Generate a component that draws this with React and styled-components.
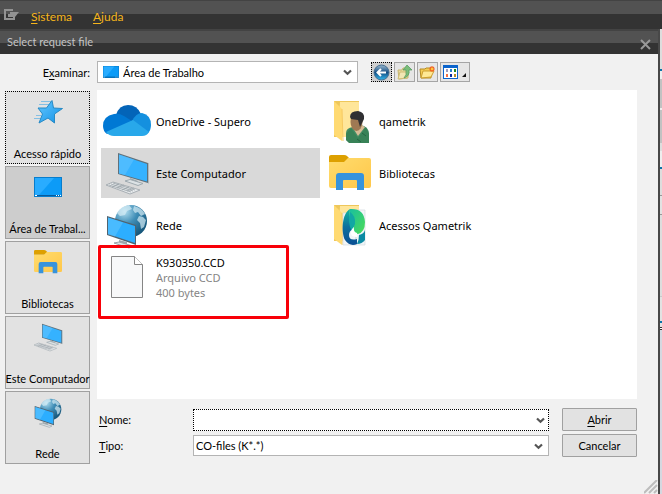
import React from "react";
import styled, { createGlobalStyle } from "styled-components";

const GlobalStyle = createGlobalStyle`
  * { box-sizing: border-box; }
  body { margin: 0; background: #f1f1f1; color: #000; }
  body, button, input, select { font-family: Lato, "Liberation Sans", sans-serif; font-size: 11px; }
  button, input, select { color: inherit; margin: 0; }
  svg { display: block; flex: none; }
`;

const Screen = styled.div`
  min-height: 100vh;
  display: flex;
  flex-direction: column;
`;

const MenuBar = styled.nav`
  height: 29px;
  flex: none;
  display: flex;
  align-items: center;
  gap: 21px;
  padding: 4px 4px 0;
  background: linear-gradient(#434343 0 1px, #525252 1px 14px, #333 14px);
`;

const MenuIcon = styled.button`
  border: 0;
  padding: 0;
  background: none;
  margin: 0 -10px 4px 0;
`;

const MenuItem = styled.button`
  border: 0;
  padding: 0;
  background: none;
  color: #f6b51b;
  font-size: 12px;
  line-height: 16px;
`;

const Key = styled.span`
  text-decoration: underline;
  text-underline-offset: 2px;
`;

const Workspace = styled.div`
  flex: 1;
  display: flex;
  padding-right: 2px;
  background: linear-gradient(
    #ddd 0 40px, #0b74a8 40px 42px, #eee 42px 50px, #c2c2c2 50px 79px, #eee 79px 81px,
    #c2c2c2 81px 114px, #ddd 114px 122px, #eee 122px 138px, #0b74a8 138px 140px,
    #ddd 140px 166px, #999 166px 167px, #e2e2e2 167px 185px, #999 185px 186px,
    #ddd 186px 267px, #c9c9c9 267px 268px, #e2e2e2 268px 292px, #0b74a8 292px 294px,
    #e2e2e2 294px 298px, #333 298px 299px, #fff 299px 300px, #333 300px 301px, #d5d8e0 301px
  );
`;

const Dialog = styled.section`
  flex: 1;
  min-width: 0;
  display: flex;
  flex-direction: column;
  background: #f1f1f1;
  border-right: 2px solid #484848;
`;

const TitleBar = styled.header`
  height: 25px;
  flex: none;
  display: flex;
  align-items: center;
  justify-content: space-between;
  padding: 0 7px;
  color: #c4c4c4;
  background: linear-gradient(#434343 0 2px, #525252 2px 14px, #333 14px);
`;

const Title = styled.h1`
  margin: 0;
  font-size: 11px;
  font-weight: 400;
  line-height: 16px;
`;

const CloseButton = styled.button`
  border: 0;
  padding: 5px 0 0;
  background: none;
`;

const Body = styled.div`
  flex: 1;
  display: grid;
  grid-template-columns: 85px 1fr;
  grid-template-rows: 22px auto 1fr;
  column-gap: 7px;
  row-gap: 7px;
  padding: 7px 21px 0 5px;
`;

const LookLabel = styled.label`
  align-self: center;
  text-align: right;
`;

const LookRow = styled.div`
  display: flex;
  align-items: center;
  gap: 13px;
`;

const Combo = styled.div`
  position: relative;
  height: ${(p) => p.$height || 22}px;
  ${(p) => p.$width && `width: ${p.$width}px;`}
  background: #fff;
  border: 1px ${(p) => (p.$focused ? "dotted #000" : "solid #b4b4b4")};
`;

const Select = styled.select`
  appearance: none;
  display: block;
  width: 100%;
  height: 100%;
  border: 0;
  outline: 0;
  padding: 0 20px 0 ${(p) => p.$inset || 2}px;
  background: transparent;
`;

const TextInput = styled.input`
  display: block;
  width: 100%;
  height: 100%;
  border: 0;
  outline: 0;
  padding: 0 20px 0 2px;
  background: transparent;
`;

const ComboIcon = styled.span`
  position: absolute;
  left: 5px;
  top: 4px;
  pointer-events: none;
`;

const ComboArrow = styled.span`
  position: absolute;
  right: ${(p) => p.$right || 5}px;
  top: 7px;
  pointer-events: none;
`;

const Tools = styled.div`
  display: flex;
  gap: 2px;
`;

const ToolButton = styled.button`
  width: ${(p) => (p.$wide ? 30 : 21)}px;
  height: 20px;
  padding: 0;
  display: flex;
  align-items: center;
  justify-content: center;
  border: 1px ${(p) => (p.$focused ? "dotted #000" : "solid #a5a5a5")};
  background: ${(p) => (p.$focused ? "#cfcfcf" : "#e6e6e6")};
`;

const Places = styled.nav`
  grid-row: 2 / 4;
  display: flex;
  flex-direction: column;
  gap: 2px;
  padding-top: 1px;
`;

const Place = styled.button`
  height: 73px;
  padding: 3px 0 2px;
  display: flex;
  flex-direction: column;
  align-items: center;
  justify-content: space-between;
  white-space: nowrap;
  line-height: 14px;
  border: 1px ${(p) => (p.$focused ? "dotted #000" : "solid #a0a0a0")};
  background: ${(p) => (p.$active ? "#cdcdcd" : "#e2e2e2")};
`;

const PlaceIcon = styled.span`
  height: 34px;
  display: flex;
  align-items: center;
`;

const FileList = styled.ul`
  margin: 0;
  padding: 6px 4px;
  min-height: 309px;
  list-style: none;
  background: #fff;
  display: grid;
  grid-template-columns: repeat(auto-fill, 219px);
  grid-auto-rows: 50px;
  align-content: start;
  gap: 2px 4px;
`;

const FileItem = styled.li`
  position: relative;
  grid-column: ${(p) => p.$column};
  display: flex;
  align-items: center;
  gap: 5px;
  padding-left: 2px;
  font-family: "Noto Sans", sans-serif;
  font-size: 11px;
  line-height: 15px;
  background: ${(p) => (p.$selected ? "#d9d9d9" : "transparent")};
`;

const Detail = styled.div`
  color: #858585;
`;

const Highlight = styled.span`
  position: absolute;
  left: -3px;
  top: -7px;
  width: 191px;
  height: 74px;
  border: 3px solid #f80008;
  border-radius: 2px;
`;

const Fields = styled.form`
  align-self: start;
  display: grid;
  grid-template-columns: 94px 1fr 75px;
  grid-template-rows: 23px 23px;
  row-gap: 3px;
  align-items: center;
  margin-top: 2px;
  padding-left: 2px;
`;

const FieldBox = styled.div`
  margin-right: 13px;
`;

const PushButton = styled.button`
  height: 23px;
  padding: 0;
  border: 1px solid #a0a0a0;
  border-radius: 1px;
  background: #e2e2e2;
`;

const GripRow = styled.footer`
  display: flex;
  justify-content: flex-end;
  margin-top: -14px;
`;

const Chevron = () => (
  <svg width="9" height="7" viewBox="0 0 9 7">
    <path d="M1 1.5 4.5 4.7 8 1.5" fill="none" stroke="#555" strokeWidth="2.2" />
  </svg>
);

const DesktopIcon = ({ size }) => (
  <svg width={size} height={size === 16 ? 12 : 20} viewBox="0 0 28 20" preserveAspectRatio="none">
    <path d="M0 0H28V20H0Z" fill="#087dcc" />
    <path d="M1 1H27V18H1Z" fill="#0c9bf7" />
    <path d="M1 1H20L5 18H1Z" fill="#29acff" />
    <path d="M1 18.5H27" stroke="#075a9b" />
    <path d="M1 18.5H3M22 18.5H23M24 18.5H25M26 18.5H27" stroke="#fff" />
  </svg>
);

const StarIcon = () => (
  <svg width="32" height="26" viewBox="0 0 32 26">
    <defs>
      <linearGradient id="star" x1="0" y1="0" x2="1" y2="1">
        <stop offset="0" stopColor="#65c8ff" />
        <stop offset="1" stopColor="#1291e6" />
      </linearGradient>
    </defs>
    <path d="M9 2.5H19M7 5.500H18M4 16.500H9M2 19.500H9" stroke="#84bfe3" />
    <path d="M20 1.500 21.500 9 30.500 9.500 22.500 15 22.500 24 16 19 7 24 10.500 15 6 9 14.500 9Z" fill="url(#star)" stroke="#278ac5" />
  </svg>
);

const LibraryIcon = ({ size }) => (
  <svg width={size} height={size} viewBox="0 0 48 48">
    <defs>
      <linearGradient id="lib" x1="0" y1="0" x2="1" y2="1">
        <stop offset="0" stopColor="#ffdc6d" />
        <stop offset="1" stopColor="#ffc74a" />
      </linearGradient>
    </defs>
    <path d="M3 12V8Q3 6 5 6H18Q20 6 21 7L24 10 20 13H3Z" fill="#dda000" />
    <path d="M3 13H18L22 9H43Q45 9 45 11V37Q45 39 43 39H5Q3 39 3 37Z" fill="url(#lib)" />
    <path d="M10 41V27Q10 24 13 24H35Q38 24 38 27V41H31V32Q31 31 30 31H18Q17 31 17 32V41Z" fill="#3793dc" />
  </svg>
);

const ComputerIcon = ({ size }) => (
  <svg width={size} height={size} viewBox="0 0 48 48">
    <path d="m15 4 30 10v20L15 25Z" fill="#60717b" />
    <path d="m16 5.500 28 9.500v17.500L16 24.500Z" fill="#35b2ff" />
    <path d="m16 5.500 15 5-9 15.500-6-1.500Z" fill="#67c6ff" opacity=".5" />
    <path d="m45 14 1 0v20l-1 1Z" fill="#adb8be" />
    <path d="m27 29 8 3-1 3-6-2Z" fill="#98a4aa" />
    <path d="m22 32 5-1.500 13 4-5 2Z" fill="#dce2e5" stroke="#9faab0" />
    <path d="m3 36 7-3 27 8-10 4Z" fill="#e8ebed" stroke="#a8afb4" />
    <path d="m6 36 22 7M8 35l22 7M10 34l22 7M9 38l7-3M14 39l7-3M19 41l7-3M24 42l7-3" stroke="#9ba3a8" strokeWidth=".8" />
  </svg>
);

const NetworkIcon = ({ size }) => (
  <svg width={size} height={size} viewBox="0 0 48 48">
    <defs>
      <radialGradient id="globe" cx=".3" cy=".2" r=".85">
        <stop offset="0" stopColor="#b3dff0" />
        <stop offset=".45" stopColor="#408eb7" />
        <stop offset="1" stopColor="#145478" />
      </radialGradient>
    </defs>
    <circle cx="28" cy="20" r="16" fill="url(#globe)" />
    <path d="M14 12q4-7 12-8l3 4-5 2-2 4-5 1ZM31 5q8 2 11 8l-4 2-3-4-3 1-2-3ZM36 15l4 1 3 3-2 7-3 2-1-6-3-3Z" fill="#d5edf5" opacity=".7" />
    <path d="m4 15 29 9v20L4 34Z" fill="#51636f" />
    <path d="m5 16.500 27 8.500v17L5 33Z" fill="#2caeff" />
    <path d="m5 16.500 15 5-8 14-7-2Z" fill="#65c8ff" opacity=".5" />
    <path d="m16 39 8 2v4l-8-2Z" fill="#9ba6ac" />
    <path d="m11 42 5-1 14 4-4 2Z" fill="#dce2e5" stroke="#9ba6ac" />
  </svg>
);

const CloudIcon = () => (
  <svg width="48" height="48" viewBox="0 0 48 48">
    <path d="M13 18Q16 8 25 8q9 0 13 9L30 27 14 20Z" fill="#0364b8" />
    <path d="M0 29q0-10 11-12 5-1 10 2l11 7L4 37Q0 34 0 29Z" fill="#0078d4" />
    <path d="M29 24q4-8 10-8 9 2 9 12 0 5-3 8L28 26Z" fill="#1490df" />
    <path d="M3 35 30 23l16 12q-2 4-7 4H11q-5 0-8-4Z" fill="#28a8ea" />
  </svg>
);

const FolderBase = () => (
  <>
    <path d="M8 4H33V40H8Z" fill="#eec75b" />
    <path d="M14 5H33V40H12Z" fill="#ffe69a" />
    <path d="m8 4 8 8v32L8 38Z" fill="#ffda72" />
    <path d="m16 12 1 32" stroke="#f7ca61" />
  </>
);

const UserFolderIcon = () => (
  <svg width="48" height="48" viewBox="0 0 48 48">
    <FolderBase />
    <path d="M20 43V36q0-5 7-6l8-2q8 2 8 9v9H24Z" fill="#438d64" />
    <path d="m27 31 5 8 7-9-5-3Z" fill="#d7bc96" />
    <path d="m25 31 7 10 8-11 3 7v9H23l-3-3v-6Z" fill="#388257" />
    <ellipse cx="30.500" cy="25" rx="6" ry="9" fill="#9f7953" />
    <path d="M24 20q0-6 8-6 7 1 6 8l-4 8-2-7-7-1Z" fill="#303033" />
    <path d="m31 42 4 3M36 36l4 3" stroke="#246642" />
  </svg>
);

const QametrikFolderIcon = () => (
  <svg width="48" height="48" viewBox="0 0 48 48">
    <defs>
      <linearGradient id="leafLeft" x1="0" y1="0" x2="0" y2="1">
        <stop offset="0" stopColor="#14b5a0" />
        <stop offset=".5" stopColor="#0c6f9e" />
        <stop offset="1" stopColor="#0a4f93" />
      </linearGradient>
      <linearGradient id="leafRight" x1="0" y1="0" x2="1" y2="1">
        <stop offset="0" stopColor="#18bfa0" />
        <stop offset="1" stopColor="#4ddc56" />
      </linearGradient>
    </defs>
    <FolderBase />
    <path d="M17 12H30V44H17ZM30 9h9v35h-9Z" fill="#f1f5f8" stroke="#d2dbe0" strokeWidth=".7" />
    <path d="M24 8c-8 4-9 23-5 31q5 7 12 4v-5q-8 2-8-4 0-4 4-6-5-7-3-20Z" fill="url(#leafLeft)" />
    <path d="M24 8q14-1 15 13 0 10-7 12-5-1-7-8-3-8-1-17Z" fill="url(#leafRight)" />
    <path d="M24 11q6 4 5 12l-3 7q-5-8-2-19Z" fill="#12a7a4" />
    <path d="M28 26q-1 5 3 6v4q-6 0-6-4 0-4 3-6Z" fill="#fff" />
    <path d="M33 34q5-1 6-5v10q-3 4-8 4 2-4 2-9Z" fill="#0b8aa3" />
  </svg>
);

const DocumentIcon = () => (
  <svg width="48" height="48" viewBox="0 0 48 48">
    <path d="M8.500 3.500H31.500L39.500 11.500V44.500H8.500Z" fill="#f7f8f9" stroke="#858585" />
    <path d="M31.500 3.500V11.500H39.500" fill="#fff" stroke="#858585" />
  </svg>
);

const MenuGlyph = () => (
  <svg width="16" height="12" viewBox="0 0 16 12">
    <path d="M9 1H1V10H10V8M5 5V8" fill="none" stroke="#929292" strokeWidth="2" />
    <path d="M6 3H15L11 8H6Z" fill="#929292" />
  </svg>
);

const CloseGlyph = () => (
  <svg width="11" height="11" viewBox="0 0 11 11">
    <path d="m1 1 9 9M10 1 1 10" stroke="#999" strokeWidth="2" />
  </svg>
);

const BackIcon = () => (
  <svg width="17" height="17" viewBox="0 0 17 17">
    <defs>
      <linearGradient id="back" x1="0" y1="0" x2="0" y2="1">
        <stop offset="0" stopColor="#9bb9cf" />
        <stop offset=".5" stopColor="#164f84" />
        <stop offset="1" stopColor="#30b8ef" />
      </linearGradient>
    </defs>
    <circle cx="8.500" cy="8.500" r="7.500" fill="url(#back)" stroke="#456e91" />
    <path d="M13 8.500H5M8 5 4.500 8.500 8 12" fill="none" stroke="#fff" strokeWidth="2" />
  </svg>
);

const UpIcon = () => (
  <svg width="17" height="17" viewBox="0 0 17 17">
    <path d="M2 6h4l1-2h5v10l-9 1Z" fill="#ead99a" stroke="#c7b66e" />
    <path d="m2 15 2-7h9l-2 6Z" fill="#f2e6b3" stroke="#cfbd76" />
    <path d="M8 14q3-3 2-8H7l4-5 5 5h-3q1 6-5 8Z" fill="#79bd7a" stroke="#50965a" strokeWidth=".7" />
  </svg>
);

const NewFolderIcon = () => (
  <svg width="17" height="17" viewBox="0 0 17 17">
    <path d="M1 5h5l1-1h5v10H2Z" fill="#f4cc54" stroke="#b68b20" />
    <path d="m2 14 2-7h11l-3 6Z" fill="#ffe994" stroke="#cc9f30" />
    <path d="M13 2V8M10 5H16M11 3l4 4M15 3l-4 4" stroke="#f26522" strokeWidth="1.200" />
    <circle cx="13" cy="5" r="1.200" fill="#ffca38" />
  </svg>
);

const ViewIcon = () => (
  <svg width="24" height="14" viewBox="0 0 24 14">
    <path d="M0 0H15V14H0Z" fill="#0b64cc" />
    <path d="M1 3H14V13H1Z" fill="#fff" />
    <path d="M3 4H5V7H3Z" fill="#999bc0" />
    <path d="M7 4H9V7H7Z" fill="#277fd1" />
    <path d="M11 4H13V7H11Z" fill="#168420" />
    <path d="M3 9H5V12H3Z" fill="#f27044" />
    <path d="M7 9H9V12H7Z" fill="#0a2da0" />
    <path d="M11 9H13V12H11Z" fill="#b88d24" />
    <path d="M23 8V12H19Z" fill="#111" />
  </svg>
);

const Grip = () => (
  <svg width="14" height="14" viewBox="0 0 14 14">
    <path d="M0 13 13 0M5 13l8-8M10 13l3-3" stroke="#bdbdbd" strokeWidth="2" />
  </svg>
);

const places = [
  { name: "Acesso rápido", icon: <StarIcon />, focused: true },
  { name: "Área de Trabal...", icon: <DesktopIcon size={28} />, active: true },
  { name: "Bibliotecas", icon: <LibraryIcon size={32} /> },
  { name: "Este Computador", icon: <ComputerIcon size={32} /> },
  { name: "Rede", icon: <NetworkIcon size={32} /> },
];

const files = [
  { name: "OneDrive - Supero", icon: <CloudIcon /> },
  { name: "qametrik", icon: <UserFolderIcon /> },
  { name: "Este Computador", icon: <ComputerIcon size={48} />, selected: true },
  { name: "Bibliotecas", icon: <LibraryIcon size={48} /> },
  { name: "Rede", icon: <NetworkIcon size={48} /> },
  { name: "Acessos Qametrik", icon: <QametrikFolderIcon /> },
  { name: "K930350.CCD", icon: <DocumentIcon />, details: ["Arquivo CCD", "400 bytes"], marked: true },
];

export default function App() {
  return (
    <Screen>
      <GlobalStyle />
      <MenuBar>
        <MenuIcon type="button" aria-label="Menu"><MenuGlyph /></MenuIcon>
        <MenuItem type="button"><Key>S</Key>istema</MenuItem>
        <MenuItem type="button"><Key>A</Key>juda</MenuItem>
      </MenuBar>
      <Workspace>
        <Dialog aria-labelledby="title">
          <TitleBar>
            <Title id="title">Select request file</Title>
            <CloseButton type="button" aria-label="Fechar"><CloseGlyph /></CloseButton>
          </TitleBar>
          <Body>
            <LookLabel htmlFor="look">E<Key>x</Key>aminar:</LookLabel>
            <LookRow>
              <Combo $width={261}>
                <ComboIcon><DesktopIcon size={16} /></ComboIcon>
                <Select id="look" $inset={25}><option>Área de Trabalho</option></Select>
                <ComboArrow><Chevron /></ComboArrow>
              </Combo>
              <Tools>
                <ToolButton type="button" aria-label="Voltar" $focused><BackIcon /></ToolButton>
                <ToolButton type="button" aria-label="Um nível acima"><UpIcon /></ToolButton>
                <ToolButton type="button" aria-label="Nova pasta"><NewFolderIcon /></ToolButton>
                <ToolButton type="button" aria-label="Exibir" $wide><ViewIcon /></ToolButton>
              </Tools>
            </LookRow>
            <Places>
              {places.map((p) => (
                <Place key={p.name} type="button" $focused={p.focused} $active={p.active}>
                  <PlaceIcon>{p.icon}</PlaceIcon>
                  <span>{p.name}</span>
                </Place>
              ))}
            </Places>
            <FileList>
              {files.map((f, i) => (
                <FileItem key={f.name} $selected={f.selected} $column={(i % 2) + 1}>
                  {f.icon}
                  <div>
                    {f.name}
                    {f.details && f.details.map((d) => <Detail key={d}>{d}</Detail>)}
                  </div>
                  {f.marked && <Highlight />}
                </FileItem>
              ))}
            </FileList>
            <Fields onSubmit={(e) => e.preventDefault()}>
              <label htmlFor="name"><Key>N</Key>ome:</label>
              <FieldBox>
                <Combo $focused>
                  <TextInput id="name" />
                  <ComboArrow $right={3}><Chevron /></ComboArrow>
                </Combo>
              </FieldBox>
              <PushButton type="submit"><Key>A</Key>brir</PushButton>
              <label htmlFor="type"><Key>T</Key>ipo:</label>
              <FieldBox>
                <Combo $height={21}>
                  <Select id="type"><option>CO-files (K*.*)</option></Select>
                  <ComboArrow><Chevron /></ComboArrow>
                </Combo>
              </FieldBox>
              <PushButton type="button">Cancelar</PushButton>
            </Fields>
          </Body>
          <GripRow><Grip /></GripRow>
        </Dialog>
      </Workspace>
    </Screen>
  );
}
